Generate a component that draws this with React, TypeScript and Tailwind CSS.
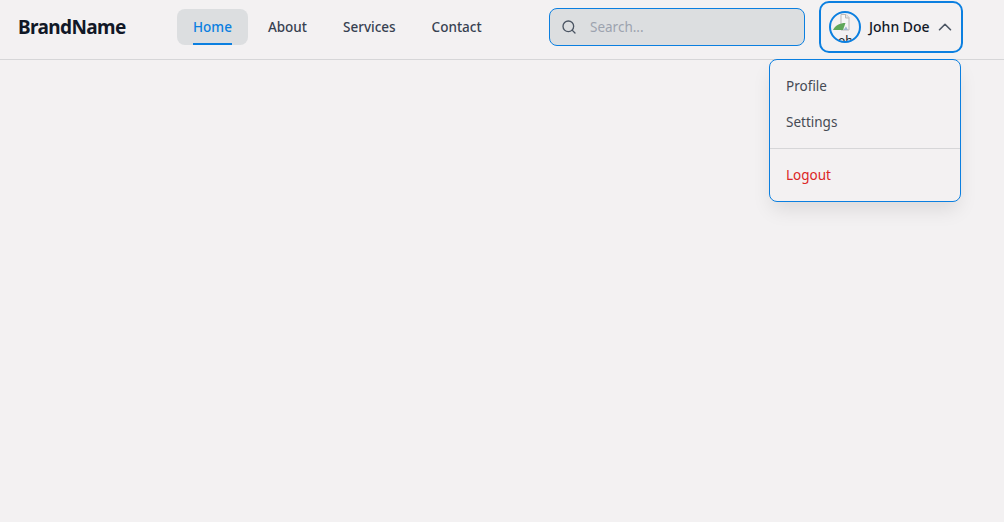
import { ChevronUp, Search } from 'lucide-react'

const navItems = [
  { name: 'Home', active: true },
  { name: 'About', active: false },
  { name: 'Services', active: false },
  { name: 'Contact', active: false },
]

// Broken image placeholder the browser shows when the avatar fails to load
function BrokenImage() {
  return (
    <svg width="20" height="20" viewBox="0 0 20 20" className="absolute left-0 top-0">
      <path d="M10 1.5H15L18 4.5V17H10Z" fill="#f6f6f6" stroke="#b9b9b9" />
      <path d="M14.5 1.5V5H18" fill="#e4e4e4" stroke="#b9b9b9" />
      <path d="M2 17C4 12.5 9 10 14.5 10L12 17Z" fill="#5fa75a" />
      <path d="M12.5 17L15 13.5L17 17Z" fill="#9fb6cf" />
    </svg>
  )
}

export default function App() {
  return (
    <div className="min-h-[522px] bg-[#f3f1f2] font-['Noto_Sans',sans-serif]">
      <header className="relative flex h-[60px] items-center justify-between border-b border-[#d6d6d8] pb-[5px] pl-[18px] pr-[41px]">
        <div className="flex items-center">
          <span className="w-[159px] text-[19px] font-bold tracking-[-0.6px] text-[#111827]">BrandName</span>
          <nav className="flex items-center gap-1">
            {navItems.map((item) => (
              <a
                key={item.name}
                className={`relative flex h-9 items-center rounded-lg px-4 text-[13.5px] font-medium ${
                  item.active ? 'bg-[#dcdee0] text-[#0b7fe0]' : 'text-[#374151]'
                }`}
              >
                {item.name}
                {item.active && <span className="absolute bottom-0 left-4 right-4 h-0.5 bg-[#0b7fe0]" />}
              </a>
            ))}
          </nav>
        </div>

        <div className="flex items-center gap-[14px]">
          <div className="flex h-[38px] w-[256px] items-center gap-[13px] rounded-lg border border-[#0b7fe0] bg-[#dcdee0] pl-[11px]">
            <Search size={16} strokeWidth={2} className="text-[#4b5563]" />
            <span className="text-[13.5px] text-[#9ca3af]">Search...</span>
          </div>
          <button className="flex h-[52px] w-[144px] items-center gap-2 rounded-[10px] border-2 border-[#0b7fe0] pl-2">
            <span className="relative h-8 w-8 overflow-hidden rounded-full border-2 border-[#0b7fe0]">
              <BrokenImage />
              <span className="absolute left-[7px] top-[20px] text-xs text-[#111827]">ohn</span>
            </span>
            <span className="text-sm font-medium text-[#111827]">John Doe</span>
            <ChevronUp size={22} strokeWidth={1.75} className="-ml-[4px] text-[#4b5563]" />
          </button>
        </div>

        <div className="absolute left-[769px] top-[59px] w-[192px] rounded-lg border border-[#0b7fe0] bg-[#f3f1f2] shadow-[0_10px_20px_-3px_rgba(0,0,0,0.1)]">
          <div className="py-2">
            <a className="flex h-9 items-center px-4 text-[13.5px] text-[#454a54]">Profile</a>
            <a className="flex h-9 items-center px-4 text-[13.5px] text-[#454a54]">Settings</a>
          </div>
          <div className="border-t border-[#d6d6d8] py-2">
            <a className="flex h-9 items-center px-4 text-[13.5px] text-[#dc2626]">Logout</a>
          </div>
        </div>
      </header>
    </div>
  )
}
